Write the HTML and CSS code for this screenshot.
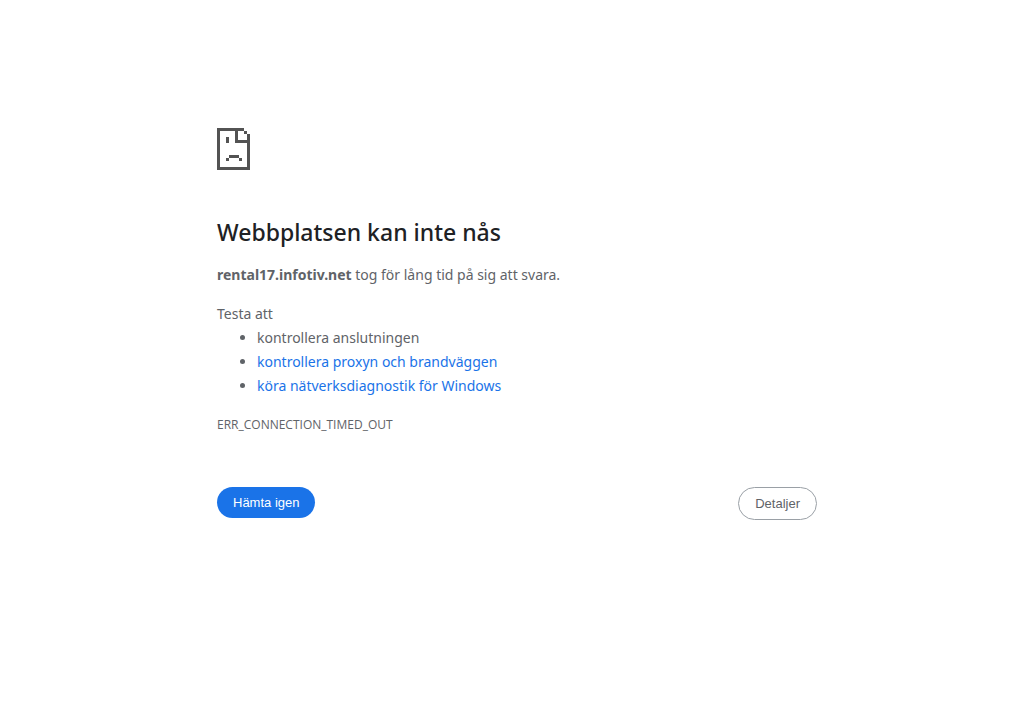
FILE: index.html
```html
<!DOCTYPE html>
<html lang="sv">
<head>
<meta charset="utf-8">
<meta name="viewport" content="width=device-width, initial-scale=1">
<title>rental17.infotiv.net</title>
<link rel="stylesheet" href="styles.css">
</head>
<body>
<main class="error">
  <svg class="error-icon" viewBox="0 0 33 42" shape-rendering="crispEdges" aria-hidden="true">
    <path fill="#535353" d="M0 0H27V3H21V12H30V6H33V42H0ZM3 3V39H30V15H18V3ZM27 3H30V6H27ZM9 9H12V15H9ZM12 27H22V30H12ZM9 30H12V33H9ZM22 30H25V33H22Z"/>
  </svg>
  <h1 class="title">Webbplatsen kan inte nås</h1>
  <p class="summary"><strong>rental17.infotiv.net</strong> tog för lång tid på sig att svara.</p>
  <div class="suggestions">
    <p class="suggestions-lead">Testa att</p>
    <ul class="suggestions-list">
      <li>kontrollera anslutningen</li>
      <li><a class="link" href="#proxy">kontrollera proxyn och brandväggen</a></li>
      <li><a class="link" href="#diagnose">köra nätverksdiagnostik för Windows</a></li>
    </ul>
  </div>
  <p class="error-code">ERR_CONNECTION_TIMED_OUT</p>
  <div class="actions">
    <button class="button button-primary" type="button">Hämta igen</button>
    <button class="button button-secondary" type="button">Detaljer</button>
  </div>
</main>
</body>
</html>
```
FILE: styles.css
```css
* {
  box-sizing: border-box;
}

body {
  margin: 0;
  background: #fff;
  color: #5f6368;
  font-family: "Segoe UI", "Noto Sans", "Open Sans", sans-serif;
  font-size: 14px;
  line-height: 24px;
}

.error {
  max-width: 600px;
  margin: 0 auto;
  padding-top: 128px;
}

.error-icon {
  display: block;
  width: 33px;
  height: 42px;
}

.title {
  margin: 48px 0 16px;
  color: #202124;
  font-size: 23px;
  font-weight: 500;
  line-height: 29px;
}

.summary,
.suggestions-lead,
.error-code {
  margin: 0;
}

.suggestions {
  margin: 15px 0;
}

.suggestions-list {
  margin: 0;
  padding-left: 40px;
}

.link {
  color: #1a73e8;
  text-decoration: none;
}

.error-code {
  font-family: "Segoe UI", "Open Sans", sans-serif;
  font-size: 12px;
}

.actions {
  display: flex;
  flex-wrap: wrap;
  align-items: flex-start;
  justify-content: space-between;
  margin-top: 50px;
}

.button {
  padding: 8px 16px;
  border: 0;
  border-radius: 20px;
  font-family: Arial, "Liberation Sans", sans-serif;
  font-size: 13px;
  line-height: 15px;
  cursor: pointer;
}

.button-primary {
  background: #1a73e8;
  color: #fff;
}

.button-secondary {
  border: 1px solid #9aa0a6;
  background: #fff;
  color: #5f6368;
}
```
